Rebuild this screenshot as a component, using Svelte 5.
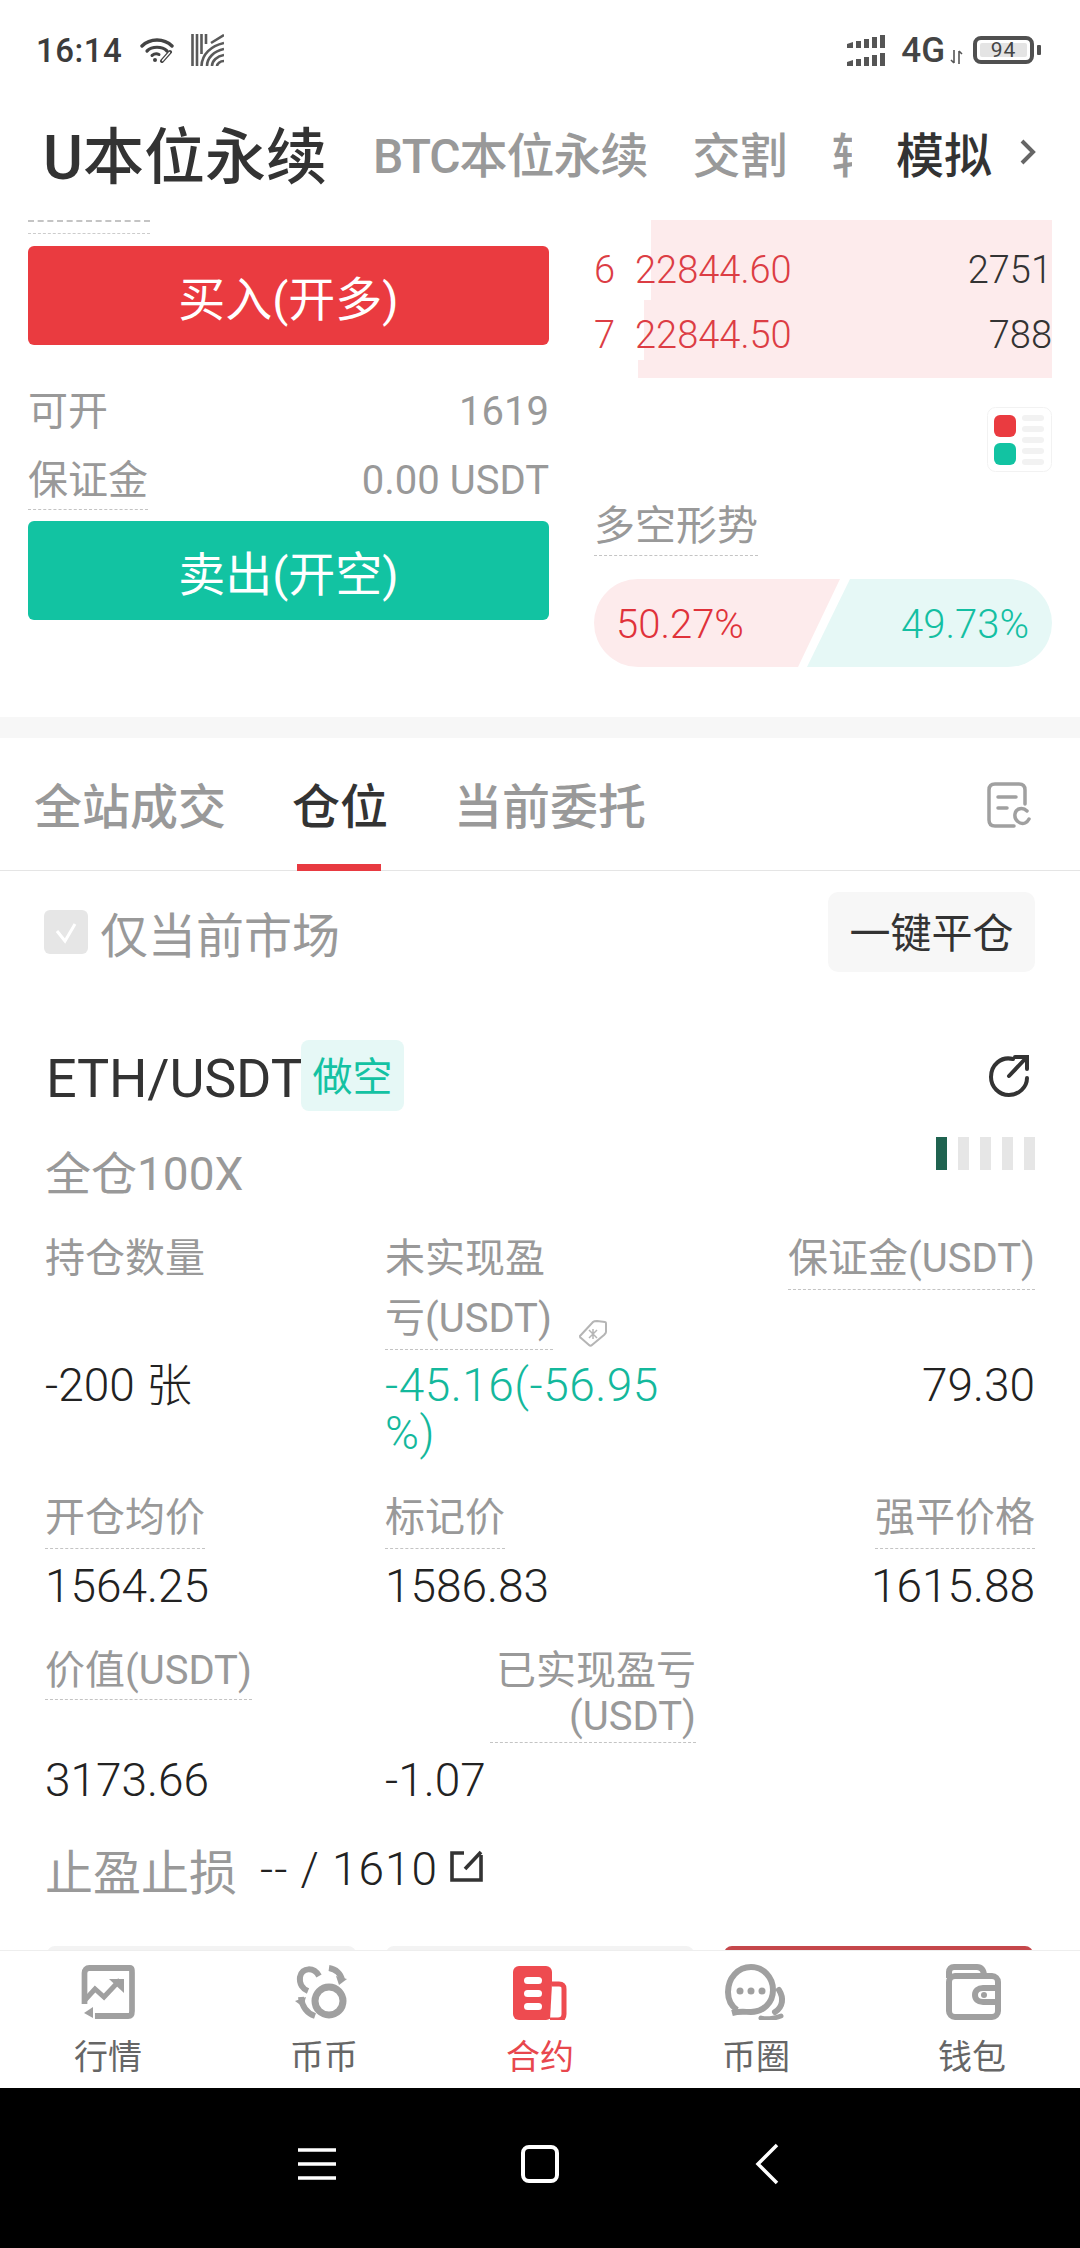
<script lang="ts">
	const book = [
		{ idx: 6, price: '22844.60', qty: '2751' },
		{ idx: 7, price: '22844.50', qty: '788' }
	];
	const depth = [
		{ width: 401, height: 80 },
		{ width: 408, height: 60 },
		{ width: 414, height: 18 }
	];
	const tabs = [
		{ label: '行情', icon: 'market' },
		{ label: '币币', icon: 'coin' },
		{ label: '合约', icon: 'contract', active: true },
		{ label: '币圈', icon: 'chat' },
		{ label: '钱包', icon: 'wallet' }
	];
</script>

<div class="page">
	<div class="status">
		<span class="time">16:14</span>
		<svg class="wifi" viewBox="0 0 34 26" fill="none" stroke="#444" stroke-linecap="round">
			<path d="M2 9C10 1 24 1 32 9" stroke-width="3.4" />
			<path d="M7 14C12 9 22 9 27 14" stroke-width="3.2" />
			<path d="M12 18.500C14.500 16.500 17 16.500 19 17.500" stroke-width="3" />
			<circle cx="15" cy="23" r="2" fill="#444" stroke="none" />
			<path d="M22 24L30 15" stroke-width="4" />
			<path d="M22.500 23.500L29.500 15.500" stroke="#fff" stroke-width="1.400" />
		</svg>
		<svg class="logo" viewBox="0 0 33 32" fill="none" stroke="#5a5a5a" stroke-width="2.600">
			<path d="M1.500 0V32M6 0V32M10.500 0V20M15 0V10" />
			<path d="M10.500 32C11 20 20 12 33 9M16 32C16 24 23 17 33 15M21 32C21 27 26 22 33 21M26 32C26 30 29 27 33 27M20 9L33 1" />
		</svg>
		<span class="spacer"></span>
		<svg class="signal" viewBox="0 0 40 31" fill="#555">
			<path d="M0 9L6 7V13H0ZM9 6H14V13H9ZM17 4H22V13H17ZM25 2H30V13H25ZM33 0H38V13H33Z" />
			<path d="M0 27L6 25V31H0ZM9 24H14V31H9ZM17 22H22V31H17ZM25 20H30V31H25ZM33 18H38V31H33Z" />
		</svg>
		<span class="net">4G</span>
		<svg class="arrows" viewBox="0 0 13 14" fill="none" stroke="#555" stroke-width="1.600">
			<path d="M4 0V13M1 10L4 13M9 14V1M12 4L9 1" />
		</svg>
		<span class="battery"><span class="level">94</span></span>
		<span class="tip"></span>
	</div>

	<div class="header">
		<span class="title">U本位永续</span>
		<div class="others">
			<span>BTC本位永续</span>
			<span>交割</span>
			<span>转仓</span>
		</div>
		<span class="sim">模拟</span>
		<svg class="more" viewBox="0 0 18 26" fill="none" stroke="#666" stroke-width="4">
			<path d="M3 2L14 13L3 24" />
		</svg>
	</div>

	<div class="scroller">
		<div class="trade">
			<div class="left">
				<div class="clipped"></div>
				<button class="btn buy">买入(开多)</button>
				<div class="row first"><span>可开</span><span>1619</span></div>
				<div class="row"><span class="dash">保证金</span><span>0.00 USDT</span></div>
				<button class="btn sell">卖出(开空)</button>
			</div>
			<div class="right">
				<div class="book">
					<div class="depths">
						{#each depth as d}
							<span style="width: {d.width}px; height: {d.height}px"></span>
						{/each}
					</div>
					{#each book as r}
						<div class="level-row">
							<span class="idx">{r.idx}</span>
							<span class="price">{r.price}</span>
							<span class="qty">{r.qty}</span>
						</div>
					{/each}
				</div>
				<svg class="legend" viewBox="0 0 65 65">
					<rect x="0.500" y="0.500" width="64" height="64" rx="8" fill="#fff" stroke="#f2f2f2" />
					<rect x="7" y="8" width="22" height="22" rx="6" fill="#ea3b40" />
					<rect x="7" y="36" width="22" height="22" rx="6" fill="#12c3a2" />
					<g fill="#f2f2f2">
						<rect x="35" y="8" width="22" height="6" rx="3" />
						<rect x="35" y="19" width="22" height="6" rx="3" />
						<rect x="35" y="30" width="22" height="6" rx="3" />
						<rect x="35" y="41" width="22" height="6" rx="3" />
						<rect x="35" y="52" width="22" height="6" rx="3" />
					</g>
				</svg>
				<span class="dash trend">多空形势</span>
				<div class="ratio">
					<div class="long">50.27%</div>
					<div class="short">49.73%</div>
				</div>
			</div>
		</div>

		<div class="gap"></div>

		<div class="tabs">
			<span class="tab">全站成交</span>
			<span class="tab on">仓位</span>
			<span class="tab">当前委托</span>
			<svg class="history" viewBox="0 0 44 46" fill="none" stroke="#a0a0a0" stroke-width="3.500" stroke-linecap="round">
				<path d="M27 44H8C4 44 2 42 2 38V8C2 4 4 2 8 2H32C36 2 38 4 38 8V22" />
				<path d="M11 15H29M11 26H20" />
				<path d="M40 29C36 25 29 26 28 32C27 38 33 43 38 41C40 40 41 39 42 37" />
			</svg>
		</div>

		<div class="filter">
			<span class="check">
				<svg viewBox="0 0 44 44" fill="none" stroke="#fff" stroke-width="3"><path d="M13 21L21 31L31 14" /></svg>
			</span>
			<span class="only">仅当前市场</span>
			<span class="spacer"></span>
			<span class="close-all">一键平仓</span>
		</div>

		<div class="position">
			<div class="pos-head">
				<span class="pair">ETH/USDT</span>
				<span class="side">做空</span>
				<span class="spacer"></span>
				<svg class="share" viewBox="0 0 42 44" fill="none" stroke="#333" stroke-width="4" stroke-linecap="round">
					<path d="M25 5C13 2 3 11 3 23C3 33 11 41 21 41C31 41 39 33 39 24" />
					<path d="M21 22L38 4M27 3H39V15" />
				</svg>
			</div>
			<div class="pos-sub">
				<span class="mode">全仓100X</span>
				<div class="risk">
					<span class="lit"></span><span></span><span></span><span></span><span></span>
				</div>
			</div>

			<div class="cols r1">
				<div class="c1">
					<div class="lab">持仓数量</div>
					<div class="val">-200 张</div>
				</div>
				<div class="c2">
					<div class="lab"><span class="dash narrow">未实现盈亏(USDT)</span>
						<svg class="tag" viewBox="0 0 30 28" fill="none" stroke="#b5b5b5" stroke-width="2">
							<path d="M2 17L15 3C16 2 18 2 19 2L27 3C28 3 28 4 28 5L28 13C28 14 27 15 26 16L14 26C13 27 12 27 11 26L3 19C2 19 2 18 2 17Z" />
							<path d="M11 11L19 19M19 11L11 19M15 10V20" stroke-width="1.500" />
						</svg>
					</div>
					<div class="val pnl">-45.16(-56.95<br />%)</div>
				</div>
				<div class="c3">
					<div class="lab"><span class="dash">保证金(USDT)</span></div>
					<div class="val">79.30</div>
				</div>
			</div>

			<div class="cols r2">
				<div class="c1">
					<div class="lab"><span class="dash">开仓均价</span></div>
					<div class="val">1564.25</div>
				</div>
				<div class="c2">
					<div class="lab"><span class="dash">标记价</span></div>
					<div class="val">1586.83</div>
				</div>
				<div class="c3">
					<div class="lab"><span class="dash">强平价格</span></div>
					<div class="val">1615.88</div>
				</div>
			</div>

			<div class="cols r3">
				<div class="c1">
					<div class="lab tight"><span class="dash">价值(USDT)</span></div>
					<div class="val low">3173.66</div>
				</div>
				<div class="c2 wide">
					<div class="lab tight end"><span class="dash realized">已实现盈亏(USDT)</span></div>
					<div class="val">-1.07</div>
				</div>
			</div>

			<div class="stop">
				<span class="stop-lab">止盈止损</span>
				<span class="stop-val">-- / 1610</span>
				<svg class="edit" viewBox="0 0 34 32" fill="none" stroke="#333" stroke-width="3.600">
					<path d="M14 3H2V30H31V5" />
					<path d="M15 19L31 2" />
				</svg>
			</div>

			<div class="actions">
				<span></span><span></span><span class="danger"></span>
			</div>
		</div>
	</div>

	<div class="tabbar">
		{#each tabs as t}
			<div class="item" class:active={t.active}>
				<svg viewBox="0 0 62 56" fill="none" stroke="#a0a0a0" stroke-width="6">
					{#if t.icon === 'market'}
						<path d="M10 40V9C10 6 12 4 15 4H58C60 4 60 6 60 9V47C60 50 59 52 56 52H21" transform="translate(-2 0) scale(.95 1)" />
						<path d="M8 36L18 25L27 33L43 16" stroke-width="5" />
						<path d="M32 15H47V29Z" fill="#a0a0a0" stroke="none" />
						<path d="M16 43L7 49L16 54Z" fill="#a0a0a0" stroke="none" />
					{:else if t.icon === 'coin'}
						<circle cx="36" cy="37" r="14" stroke-width="7" />
						<path d="M26 12C21 3 9 3 7 13C6 20 10 25 15 27" />
						<path d="M36 4C43 5 48 10 49 16" />
						<path d="M43 12L54 15L46 21Z" fill="#a0a0a0" stroke="none" />
						<path d="M8 33C9 42 13 49 22 52" />
						<path d="M2 37L13 33L10 43Z" fill="#a0a0a0" stroke="none" />
					{:else if t.icon === 'contract'}
						<rect x="4" y="2" width="39" height="54" rx="6" fill="#ee4b50" stroke="none" />
						<path d="M43 20H50C54 20 55 22 55 25V50C55 54 53 56 49 56H41" fill="#fff" stroke="#ee4b50" stroke-width="5" />
						<g fill="#fff" stroke="none">
							<rect x="15" y="13" width="18" height="7" rx="3.500" />
							<rect x="15" y="26" width="18" height="7" rx="3.500" />
							<rect x="15" y="39" width="18" height="7" rx="3.500" />
						</g>
					{:else if t.icon === 'chat'}
						<path d="M12 46C5 41 3 34 3 28C3 14 13 3 26 3C38 3 48 13 48 26C48 39 38 48 26 48C20 48 14 47 7 49" />
						<g fill="#a0a0a0" stroke="none">
							<circle cx="15" cy="27" r="3.500" />
							<circle cx="26" cy="27" r="3.500" />
							<circle cx="37" cy="27" r="3.500" />
						</g>
						<path d="M54 26C59 34 58 43 50 48" stroke-linecap="round" />
						<path d="M36 54C42 56 50 54 56 52" stroke-linecap="round" stroke-width="5" />
					{:else}
						<path d="M8 14V8C8 5 10 3 13 3H36C40 3 43 6 43 12" />
						<rect x="8" y="12" width="49" height="41" rx="6" />
						<path d="M58 24H42C37 24 34 27 34 31C34 35 37 38 42 38H58" />
						<circle cx="43" cy="31" r="3" fill="#a0a0a0" stroke="none" />
					{/if}
				</svg>
				<span>{t.label}</span>
			</div>
		{/each}
	</div>

	<div class="nav">
		<svg class="nav-menu" viewBox="0 0 38 34" fill="none" stroke="#fff" stroke-width="3.500">
			<path d="M0 3H38M0 17H38M0 31H38" />
		</svg>
		<span class="nav-home"></span>
		<svg class="nav-back" viewBox="0 0 24 42" fill="none" stroke="#fff" stroke-width="3.500">
			<path d="M22 2L3 21L22 40" />
		</svg>
	</div>
</div>

<style>
	:global(body) {
		margin: 0;
	}

	.page {
		width: 1080px;
		height: 2248px;
		display: flex;
		flex-direction: column;
		overflow: hidden;
		background: #fff;
		color: #333;
		font-family: 'Roboto', 'Noto Sans CJK SC', sans-serif;
	}

	.spacer {
		flex: 1;
	}

	.status {
		height: 100px;
		flex: none;
		display: flex;
		align-items: center;
		padding: 0 39px 0 36px;
		box-sizing: border-box;
	}

	.time {
		font-size: 33px;
		font-weight: 500;
		color: #3c3c3c;
		letter-spacing: 0.5px;
	}

	.wifi {
		width: 34px;
		height: 26px;
		margin-left: 18px;
	}

	.logo {
		width: 33px;
		height: 32px;
		margin-left: 17px;
	}

	.signal {
		width: 40px;
		height: 31px;
	}

	.net {
		font-size: 35px;
		font-weight: 500;
		color: #444;
		margin-left: 14px;
	}

	.arrows {
		width: 13px;
		height: 14px;
		margin: 14px 10px 0 5px;
	}

	.battery {
		width: 61px;
		height: 28px;
		border: 4px solid #505050;
		border-radius: 8px;
		box-sizing: border-box;
		padding: 3px;
		display: flex;
	}

	.level {
		flex: 1;
		background: #e4e4e4;
		border-radius: 2px;
		font-size: 21px;
		line-height: 15px;
		text-align: center;
		color: #444;
		letter-spacing: 1px;
	}

	.tip {
		width: 4px;
		height: 10px;
		margin-left: 3px;
		background: #505050;
		border-radius: 1px;
	}

	.header {
		height: 120px;
		flex: none;
		display: flex;
		align-items: center;
		padding: 0 0 16px 43px;
		box-sizing: border-box;
	}

	.title {
		font-size: 61px;
		font-weight: 500;
		width: 330px;
		flex: none;
		white-space: nowrap;
	}

	.others {
		width: 479px;
		flex: none;
		overflow: hidden;
		display: flex;
		gap: 45px;
		white-space: nowrap;
		font-size: 48px;
		font-weight: 500;
		letter-spacing: -1px;
		color: #999;
	}

	.sim {
		margin-left: 44px;
		font-size: 48px;
		font-weight: 500;
		white-space: nowrap;
	}

	.more {
		width: 18px;
		height: 26px;
		margin-left: 27px;
	}

	.scroller {
		flex: 1;
		min-height: 0;
		overflow: hidden;
	}

	.trade {
		display: flex;
		gap: 45px;
		padding: 0 28px;
		height: 497px;
	}

	.left {
		width: 521px;
		flex: none;
	}

	.clipped {
		width: 122px;
		height: 11px;
		border-top: 2px dashed #c4c4c4;
		border-bottom: 1px dashed #ccc;
		margin-bottom: 12px;
	}

	.btn {
		display: block;
		width: 100%;
		height: 99px;
		border: 0;
		border-radius: 6px;
		color: #fff;
		font-family: inherit;
		font-size: 47px;
		padding: 0;
	}

	.buy {
		background: #ea3b40;
	}

	.sell {
		background: #12c3a2;
		margin-top: 11px;
	}

	.row {
		display: flex;
		justify-content: space-between;
		align-items: flex-start;
		color: #999;
		font-size: 40px;
		line-height: 56px;
		margin-top: 12px;
		height: 57px;
	}

	.row.first {
		margin-top: 39px;
	}

	.dash {
		display: inline-block;
		border-bottom: 1px dashed #c4c4c4;
	}

	.right {
		flex: 1;
		min-width: 0;
	}

	.book {
		position: relative;
		height: 158px;
		padding-top: 17px;
		box-sizing: border-box;
	}

	.depths {
		position: absolute;
		inset: 0;
		display: flex;
		flex-direction: column;
		align-items: flex-end;
	}

	.depths span {
		background: #fdebec;
	}

	.level-row {
		position: relative;
		display: flex;
		align-items: center;
		height: 65px;
		font-size: 38px;
		font-weight: 300;
	}

	.idx {
		width: 41px;
		color: #dc3d44;
	}

	.price {
		flex: 1;
		color: #dc3d44;
	}

	.legend {
		display: block;
		width: 65px;
		height: 65px;
		margin: 29px 0 26px auto;
	}

	.trend {
		font-size: 41px;
		line-height: 57px;
		color: #999;
	}

	.ratio {
		display: flex;
		margin-top: 23px;
		height: 88px;
		font-size: 40px;
		font-weight: 300;
	}

	.long,
	.short {
		height: 88px;
		line-height: 92px;
		width: 246px;
		flex: none;
		box-sizing: border-box;
	}

	.long {
		background: #fdebec;
		color: #e0323a;
		border-radius: 44px 0 0 44px;
		padding-left: 22px;
		clip-path: polygon(0 0, 100% 0, calc(100% - 42px) 100%, 0 100%);
	}

	.short {
		background: #e6f8f6;
		color: #14bfa2;
		border-radius: 0 44px 44px 0;
		padding-right: 23px;
		text-align: right;
		margin-left: -33px;
		width: 245px;
		clip-path: polygon(43px 0, 100% 0, 100% 100%, 0 100%);
	}

	.gap {
		height: 21px;
		background: #f7f7f7;
	}

	.tabs {
		height: 133px;
		display: flex;
		align-items: flex-start;
		padding: 0 49px 0 34px;
		box-sizing: border-box;
		border-bottom: 1px solid #e5e5e5;
	}

	.tab {
		font-size: 48px;
		font-weight: 500;
		color: #999;
		padding-top: 8px;
		line-height: 124px;
		height: 132px;
		box-sizing: border-box;
		margin-right: 66px;
		white-space: nowrap;
		position: relative;
	}

	.tab.on {
		color: #333;
	}

	.tab.on::after {
		content: '';
		position: absolute;
		left: 5px;
		right: 7px;
		bottom: -1px;
		height: 7px;
		background: #e83a41;
	}

	.history {
		width: 44px;
		height: 46px;
		margin: 44px 0 0 auto;
		flex: none;
	}

	.filter {
		height: 80px;
		margin-top: 21px;
		display: flex;
		align-items: center;
		padding: 0 45px 0 44px;
	}

	.check {
		width: 44px;
		height: 44px;
		background: #e6e6e6;
		border-radius: 6px;
	}

	.check svg {
		display: block;
	}

	.only {
		font-size: 48px;
		color: #999;
		margin-left: 12px;
		white-space: nowrap;
	}

	.close-all {
		width: 207px;
		height: 80px;
		line-height: 84px;
		text-align: center;
		background: #f7f7f7;
		border-radius: 10px;
		font-size: 41px;
	}

	.position {
		padding: 0 45px;
	}

	.pos-head {
		display: flex;
		align-items: center;
		height: 71px;
		margin-top: 68px;
	}

	.pair {
		font-size: 54px;
		line-height: 71px;
		padding-top: 6px;
		width: 255px;
		margin-left: 1px;
		white-space: nowrap;
		letter-spacing: -0.2px;
	}

	.side {
		width: 103px;
		height: 71px;
		line-height: 75px;
		text-align: center;
		background: #e6f8f6;
		color: #14c2a3;
		font-size: 40px;
		border-radius: 8px;
	}

	.share {
		width: 42px;
		height: 44px;
		margin-right: 5px;
	}

	.pos-sub {
		display: flex;
		justify-content: space-between;
		align-items: flex-start;
		height: 92px;
		margin-top: 26px;
	}

	.mode {
		font-size: 46px;
		line-height: 62px;
		color: #999;
		margin-top: 6px;
	}

	.risk {
		display: flex;
		gap: 11px;
	}

	.risk span {
		width: 11px;
		height: 33px;
		background: #e6e6e6;
	}

	.risk .lit {
		background: #1f6350;
	}

	.cols {
		display: flex;
	}

	.c1 {
		width: 340px;
		flex: none;
	}

	.c2 {
		width: 285px;
		flex: none;
		position: relative;
	}

	.c2.wide {
		width: 311px;
	}

	.c3 {
		flex: 1;
		text-align: right;
	}

	.lab {
		font-size: 40px;
		line-height: 60px;
		color: #999;
	}

	.lab .dash {
		vertical-align: top;
	}

	.r1 .lab {
		min-height: 121px;
	}

	.r1 .val {
		margin-top: 11px;
	}

	.lab.tight {
		line-height: 46px;
	}

	.lab.tight .dash {
		padding-bottom: 5px;
	}

	.lab.end {
		text-align: right;
	}

	.lab.end .dash {
		padding-bottom: 2px;
	}

	.narrow {
		width: 168px;
		word-break: break-all;
	}

	.realized {
		width: 206px;
		word-break: break-all;
	}

	.tag {
		position: absolute;
		left: 193px;
		top: 90px;
		width: 30px;
		height: 28px;
	}

	.val {
		font-size: 46px;
		font-weight: 300;
		line-height: 48px;
		margin-top: 13px;
		color: #222;
	}

	.val.low {
		margin-top: 56px;
	}

	.val.pnl {
		color: #14b89c;
		letter-spacing: 0.5px;
	}

	.r2 {
		margin-top: 31px;
	}

	.r3 {
		margin-top: 38px;
	}

	.stop {
		display: flex;
		align-items: center;
		height: 60px;
		margin-top: 35px;
	}

	.stop-lab {
		font-size: 48px;
		color: #999;
		width: 215px;
	}

	.stop-val {
		font-size: 46px;
		font-weight: 300;
		letter-spacing: 1px;
		color: #222;
	}

	.edit {
		width: 34px;
		height: 32px;
		margin: -6px 0 0 12px;
	}

	.actions {
		display: flex;
		gap: 30px;
		margin-top: 47px;
		padding: 0 2px;
	}

	.actions span {
		flex: 1;
		height: 80px;
		background: #f3f3f3;
		border-radius: 8px;
	}

	.actions .danger {
		background: #c5474b;
	}

	.tabbar {
		height: 138px;
		flex: none;
		display: flex;
		border-top: 1px solid #eee;
		background: #fff;
		box-sizing: border-box;
	}

	.item {
		flex: 1;
		display: flex;
		flex-direction: column;
		align-items: center;
		color: #666;
		font-size: 34px;
		line-height: 44px;
	}

	.item svg {
		width: 62px;
		height: 56px;
		margin: 13px 0 15px;
	}

	.item.active {
		color: #e8474d;
	}

	.nav {
		height: 160px;
		flex: none;
		background: #000;
		display: flex;
		align-items: center;
		padding-bottom: 8px;
		box-sizing: border-box;
	}

	.nav-menu {
		width: 38px;
		height: 34px;
		margin-left: 298px;
	}

	.nav-home {
		width: 38px;
		height: 38px;
		box-sizing: border-box;
		border: 4px solid #fff;
		border-radius: 8px;
		margin-left: 185px;
	}

	.nav-back {
		width: 24px;
		height: 42px;
		margin-left: 196px;
	}
</style>
